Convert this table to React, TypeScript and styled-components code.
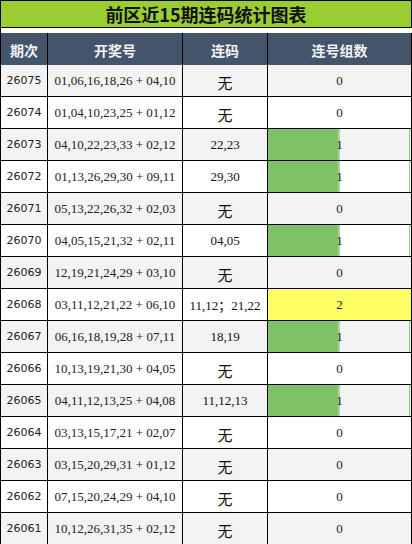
import React from "react";
import styled, { createGlobalStyle } from "styled-components";

const GlobalStyle = createGlobalStyle`
    body {
        margin: 0;
        background: #ffffff;
        font-family: "Liberation Serif", "Noto Sans CJK SC", serif;
    }
`;

type Row = {
    period: string;
    draw: string;
    pairs: string;
    count: number;
};

const rows: Row[] = [
    { period: "26075", draw: "01,06,16,18,26 + 04,10", pairs: "", count: 0 },
    { period: "26074", draw: "01,04,10,23,25 + 01,12", pairs: "", count: 0 },
    { period: "26073", draw: "04,10,22,23,33 + 02,12", pairs: "22,23", count: 1 },
    { period: "26072", draw: "01,13,26,29,30 + 09,11", pairs: "29,30", count: 1 },
    { period: "26071", draw: "05,13,22,26,32 + 02,03", pairs: "", count: 0 },
    { period: "26070", draw: "04,05,15,21,32 + 02,11", pairs: "04,05", count: 1 },
    { period: "26069", draw: "12,19,21,24,29 + 03,10", pairs: "", count: 0 },
    { period: "26068", draw: "03,11,12,21,22 + 06,10", pairs: "11,12；21,22", count: 2 },
    { period: "26067", draw: "06,16,18,19,28 + 07,11", pairs: "18,19", count: 1 },
    { period: "26066", draw: "10,13,19,21,30 + 04,05", pairs: "", count: 0 },
    { period: "26065", draw: "04,11,12,13,25 + 04,08", pairs: "11,12,13", count: 1 },
    { period: "26064", draw: "03,13,15,17,21 + 02,07", pairs: "", count: 0 },
    { period: "26063", draw: "03,15,20,29,31 + 01,12", pairs: "", count: 0 },
    { period: "26062", draw: "07,15,20,24,29 + 04,10", pairs: "", count: 0 },
    { period: "26061", draw: "10,12,26,31,35 + 02,12", pairs: "", count: 0 },
];

const maxCount = 2;

const App = () => {
    return (
        <>
            <GlobalStyle />
            <Sheet>
                <Title>前区近15期连码统计图表</Title>
                <HeadCell>期次</HeadCell>
                <HeadCell>开奖号</HeadCell>
                <HeadCell>连码</HeadCell>
                <HeadCell>连号组数</HeadCell>
                {rows.map((r, i) => (
                    <React.Fragment key={r.period}>
                        <PeriodCell $shaded={i % 2 === 0}>{r.period}</PeriodCell>
                        <DrawCell $shaded={i % 2 === 0}>{r.draw}</DrawCell>
                        <PairCell $shaded={i % 2 === 0} $none={!r.pairs}>
                            {r.pairs || "无"}
                        </PairCell>
                        <CountCell $shaded={i % 2 === 0} $top={r.count === maxCount}>
                            {r.count > 0 && r.count < maxCount && (
                                <Bar style={{ width: `${(r.count / maxCount) * 100}%` }} />
                            )}
                            {r.count > 0 && r.count < maxCount && <BarEdge />}
                            <CountText>{r.count}</CountText>
                        </CountCell>
                    </React.Fragment>
                ))}
            </Sheet>
        </>
    );
};

const Sheet = styled.div`
    display: grid;
    grid-template-columns: 47px 135px 85px 144px;
    grid-auto-rows: 32px;
    width: 411px;
    border-left: 1px solid #000;
    border-top: 1px solid #000;
`;

const Title = styled.div`
    grid-column: 1 / -1;
    height: 26px;
    display: flex;
    align-items: center;
    justify-content: center;
    background: #9acd32;
    border-right: 1px solid #000;
    border-bottom: 1px solid #000;
    font-family: "Noto Sans CJK SC", sans-serif;
    font-size: 18px;
    font-weight: 700;
    color: #111;
    line-height: 1;
`;

const HeadCell = styled.div`
    height: 35px;
    box-sizing: border-box;
    display: flex;
    align-items: center;
    justify-content: center;
    background: #44546a;
    border-right: 1px solid #000;
    border-bottom: 1px solid #000;
    font-family: "Noto Sans CJK SC", sans-serif;
    font-size: 14px;
    font-weight: 700;
    color: #f2f2f2;
`;

const Cell = styled.div<{ $shaded: boolean }>`
    box-sizing: border-box;
    display: flex;
    align-items: center;
    justify-content: center;
    background: ${(p) => (p.$shaded ? "#f3f3f3" : "#ffffff")};
    border-right: 1px solid #000;
    border-bottom: 1px solid #000;
    color: #222;
    white-space: nowrap;
    overflow: hidden;
`;

const PeriodCell = styled(Cell)`
    font-family: "DejaVu Sans", sans-serif;
    font-size: 11px;
`;

const DrawCell = styled(Cell)`
    font-family: "Liberation Serif", serif;
    font-size: 13px;
`;

const PairCell = styled(Cell)<{ $none: boolean }>`
    font-family: ${(p) => (p.$none ? `"Noto Sans CJK SC", sans-serif` : `"Liberation Serif", "Noto Sans CJK SC", serif`)};
    font-size: ${(p) => (p.$none ? "15px" : "13px")};
    padding-top: ${(p) => (p.$none ? "3px" : "0")};
    color: #111;
`;

const CountCell = styled(Cell)<{ $top: boolean }>`
    position: relative;
    background: ${(p) => (p.$top ? "#ffff66" : p.$shaded ? "#f3f3f3" : "#ffffff")};
    font-family: "Liberation Serif", serif;
    font-size: 13px;
`;

const Bar = styled.div`
    position: absolute;
    left: 0;
    top: 0;
    bottom: 0;
    background: linear-gradient(to right, #7fc167 0%, #7fc167 96%, #b9dfab 100%);
`;

const BarEdge = styled.div`
    position: absolute;
    right: 1px;
    top: 0;
    bottom: 0;
    width: 1px;
    background: #8fcb7c;
`;

const CountText = styled.span`
    position: relative;
`;

export default App;
